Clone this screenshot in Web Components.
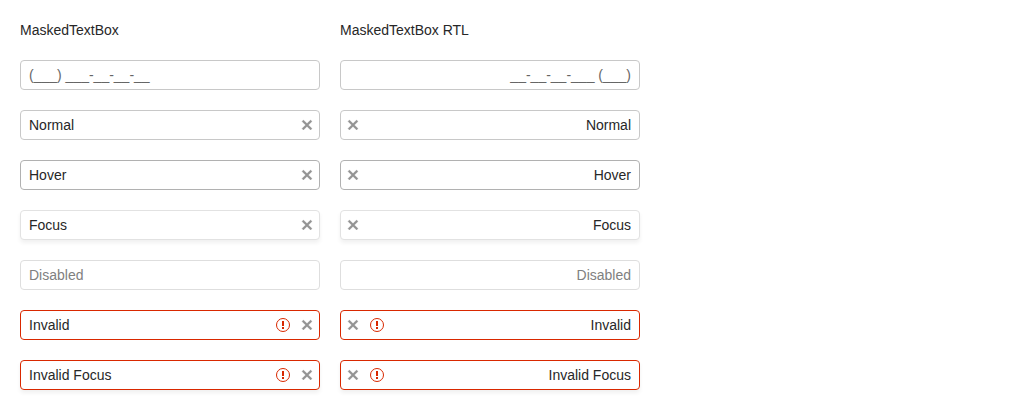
<!DOCTYPE html>
<html lang="en">
<head>
<meta charset="utf-8">
<title>MaskedTextBox</title>
<style>
body { margin: 0; background: #fff; color: #272727; font: 14px/20px "Liberation Sans", Arial, sans-serif; }
</style>
</head>
<body>
<masked-gallery></masked-gallery>
<script>
class MaskedTextBox extends HTMLElement {
  connectedCallback() {
    const state = this.getAttribute('state') || '';
    const invalid = state.startsWith('invalid');
    const clear = state && state !== 'disabled';
    this.attachShadow({ mode: 'open' }).innerHTML = `
      <style>
        :host { display: flex; box-sizing: border-box; width: 300px; height: 30px; border: 1px solid #c8c8c8; border-radius: 4px; background: #fff; }
        :host([state=""]) { color: #666; }
        :host([state="hover"]) { border-color: #b1b1b1; }
        :host([state="focus"]) { border-color: #e2e2e2; box-shadow: 0 3px 4px rgba(0,0,0,.06); }
        :host([state="disabled"]) { border-color: #dedede; color: #808080; }
        :host([state^="invalid"]) { border-color: #d92800; }
        :host([state="invalid-focus"]) { box-shadow: 0 3px 4px rgba(0,0,0,.06); }
        .value { flex: 1; padding: 4px 8px; white-space: nowrap; }
        .validation, .clear { display: flex; align-items: center; justify-content: center; width: 24px; }
        .validation { color: #d92800; }
        .clear { color: #939393; }
        svg { display: block; width: 16px; height: 16px; fill: currentColor; }
      </style>
      <div class="value"><slot></slot></div>
      ${invalid ? `<div class="validation"><svg viewBox="0 0 16 16"><circle cx="8" cy="8" r="6.5" fill="none" stroke="currentColor"/><path d="M7 4h2v5H7ZM7 10h2v2H7Z"/></svg></div>` : ''}
      ${clear ? `<div class="clear"><svg viewBox="0 0 16 16"><path d="M13 4.4 11.6 3 8 6.6 4.4 3 3 4.4 6.6 8 3 11.6 4.4 13 8 9.4 11.6 13 13 11.6 9.4 8Z" stroke="currentColor" stroke-width=".3"/></svg></div>` : ''}`;
  }
}
class MaskedGallery extends HTMLElement {
  connectedCallback() {
    const rows = [['', ''], ['normal', 'Normal'], ['hover', 'Hover'], ['focus', 'Focus'], ['disabled', 'Disabled'], ['invalid', 'Invalid'], ['invalid-focus', 'Invalid Focus']];
    const cells = rows.map(([state, text]) => `
      <masked-text-box state="${state}">${text || '(___) ___-__-__-__'}</masked-text-box>
      <masked-text-box state="${state}" dir="rtl"><bdi dir="ltr">${text || '__-__-__-___ (___)'}</bdi></masked-text-box>`).join('');
    this.attachShadow({ mode: 'open' }).innerHTML = `
      <style>
        :host { display: grid; grid-template-columns: 300px 300px; gap: 20px; padding: 20px; }
        span { display: block; height: 20px; }
      </style>
      <span>MaskedTextBox</span><span>MaskedTextBox RTL</span>${cells}`;
  }
}
customElements.define('masked-text-box', MaskedTextBox);
customElements.define('masked-gallery', MaskedGallery);
</script>
</body>
</html>
